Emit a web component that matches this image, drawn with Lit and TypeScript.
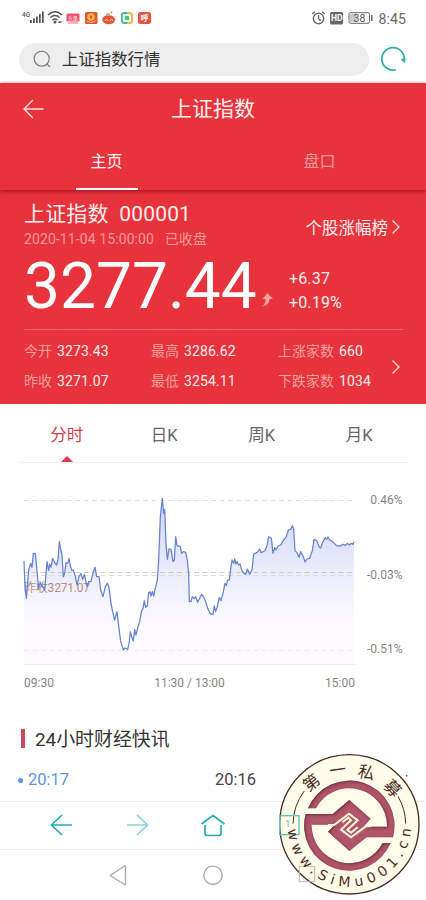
import { css, html, LitElement, svg } from "lit";
import { customElement } from "lit/decorators.js";

// intraday line, three units per css pixel
const LINE = `72,243 75,320 79,355 86,270 92,250 96,262 100,220 106,220 110,262 116,325 121,308
  128,320 134,330 141,245 146,272 149,252 153,262 158,235 163,246 170,255 174,240 178,185 182,208
  186,225 190,290 194,280 198,248 203,250 207,235 212,262 216,272 220,270 226,290 231,315 237,290
  243,280 248,298 253,283 261,320 266,305 273,305 280,275 285,262 290,290 297,290 302,330 309,350
  316,320 322,310 327,322 333,370 338,395 344,420 351,395 355,430 362,485 370,510 375,504 383,508
  388,485 391,455 395,470 400,483 404,448 408,465 414,440 419,425 425,392 429,385 433,362 437,382
  442,378 446,338 450,335 453,348 457,335 461,348 467,320 472,300 476,240 481,110 487,55 491,100
  494,88 498,190 502,238 507,207 513,208 519,245 523,240 527,170 531,197 541,200 545,220 550,215
  557,217 562,240 566,280 568,365 573,365 577,350 582,356 587,350 593,367 599,355 605,343 611,352
  617,365 623,385 630,400 639,404 643,378 647,395 652,380 658,352 663,362 669,340 675,310 679,317
  683,300 688,300 693,260 696,240 701,250 704,237 708,252 712,245 716,255 720,252 726,272 732,280
  737,283 742,267 749,283 756,270 761,222 772,217 779,207 783,218 794,213 801,197 806,170 814,175
  819,220 824,203 828,210 834,198 842,195 852,178 859,170 865,150 872,148 877,137 881,147 885,212
  891,218 897,232 902,215 910,230 915,246 921,237 929,235 937,212 942,178 951,183 957,200 962,204
  969,185 976,172 980,178 984,171 989,180 997,184 1003,190 1010,197 1021,198 1029,193 1036,196
  1043,190 1048,195 1054,190 1059,193 1062,186`;

const STATS = [
  ["今开", "3273.43"],
  ["最高", "3286.62"],
  ["上涨家数", "660"],
  ["昨收", "3271.07"],
  ["最低", "3254.11"],
  ["下跌家数", "1034"],
];

const CHEVRON = html`<svg width="10" height="16" viewBox="0 0 10 16">
  <path d="M1.500 1.500 8 8l-6.500 6.500" fill="none" stroke="#ffe1de" stroke-width="1.300" />
</svg>`;

@customElement("status-bar")
export class StatusBar extends LitElement {
  static styles = css`
    :host {
      display: flex;
      justify-content: space-between;
      height: 37px;
      padding: 0 20px 0 22px;
    }

    .right {
      display: flex;
      align-items: center;
      font: 14px Roboto, sans-serif;
      color: #686868;
    }

    .clock {
      margin-left: 5px;
      letter-spacing: 0.1px;
    }

    svg {
      display: block;
    }
  `;

  render() {
    return html`
      <svg width="135" height="37" viewBox="22 0 135 37">
        <text x="22" y="17" font-family="Roboto" font-size="6.500" font-weight="500" fill="#555">4G</text>
        <g fill="#555">
          <path d="M30 20h1.800v3H30zM33 18.500h1.800V23H33zM36 16.500h1.800V23H36zM39 14h1.700v9H39zM42 11.500h1.700V23H42z" />
          <circle cx="55" cy="22" r="1.500" />
          <path d="m58 23 1.500-2 1.300 2zM59.800 21.300h2.400L61 23z" />
        </g>
        <g fill="none" stroke="#555" stroke-width="1.400">
          <path d="M48 15q7-6.500 14 0M50.300 17.500q4.700-4 9.400 0M52.500 20q2.500-2.200 5 0" />
        </g>
        <rect x="66.500" y="13.500" width="13" height="8" rx="1" fill="#ef5269" />
        <text x="68" y="19.500" font-family="Noto Sans CJK SC" font-size="5" fill="#fff">头条</text>
        <path d="M68 23h10" stroke="#f59aa7" stroke-width="1.500" />
        <rect x="85" y="12" width="12.500" height="12" rx="1.500" fill="#e3543b" />
        <circle cx="91" cy="17" r="3.800" fill="#f9b53c" />
        <path d="M90 15.500h2v3h-2z" fill="#e3543b" />
        <path d="m86.500 21 4.500 1.500 4.500-1.500" fill="none" stroke="#f6c077" />
        <ellipse cx="108.700" cy="19.800" rx="6.500" ry="4.500" fill="#e35a3b" />
        <path d="M106 15.500q1-2 4-1.500" fill="none" stroke="#8a9a5a" stroke-width="1.200" />
        <circle cx="111.500" cy="12.500" r="1" fill="#ed745b" />
        <path d="m105 21 1.500-2 1.500 2m2 0 1.500-2 1.500 2" fill="none" stroke="#fac4a7" />
        <path d="M124 12h6v12h-6a3 3 0 0 1-3-3v-6a3 3 0 0 1 3-3z" fill="#4dbb9b" />
        <path d="M127 12h3a3 3 0 0 1 3 3v6a3 3 0 0 1-3 3h-3z" fill="#e6b84c" />
        <rect x="122.800" y="14" width="8.200" height="8" rx="1.500" fill="#e6fff4" />
        <path d="M125 16h4v4h-4z" fill="#53be83" />
        <rect x="138" y="12" width="13" height="12" rx="2.500" fill="#e6533f" />
        <text x="140.500" y="21" font-family="Noto Sans CJK SC" font-size="8" font-weight="700" fill="#fff">呼</text>
      </svg>
      <div class="right">
        <svg width="63" height="37" viewBox="313 0 63 37">
          <g fill="none" stroke="#686868" stroke-width="1.400">
            <circle cx="320.500" cy="18.500" r="5.200" />
            <path d="M320.500 15v3.800l2.300 2M314.300 14l2.600-2.200M326.700 14l-2.600-2.200" />
            <rect x="351" y="12.700" width="20.500" height="10.600" rx="1.500" stroke-width="1" />
          </g>
          <rect x="332" y="12" width="13" height="12.500" rx="1.500" fill="#686868" />
          <text x="333" y="21.300" font-family="Roboto" font-size="8.500" font-weight="700" fill="#fff">HD</text>
          <path d="M352 13.700h7v8.600h-7z" fill="#c9c9c9" />
          <path d="M373 15h1.500v6H373z" fill="#686868" />
          <text x="355.500" y="22" font-family="Roboto" font-size="10.500" fill="#555">38</text>
        </svg>
        <span class="clock">8:45</span>
      </div>
    `;
  }
}

@customElement("quote-panel")
export class QuotePanel extends LitElement {
  static styles = css`
    :host {
      display: block;
      height: 321px;
      background: #e8323c;
      color: #fff0ee;
    }

    .head {
      height: 107px;
      box-shadow: 0 1px 4px rgba(100, 0, 0, 0.65);
    }

    .title {
      display: grid;
      grid-template-columns: 40px 1fr 40px;
      align-items: center;
      height: 50px;
      padding: 0 13px;
      font-size: 21px;
      text-align: center;
    }

    .title span {
      padding-bottom: 3px;
    }

    .back {
      justify-self: end;
    }

    .tabs {
      display: grid;
      grid-template-columns: 1fr 1fr;
      height: 56px;
      font-size: 16px;
      text-align: center;
    }

    .tab {
      display: flex;
      flex-direction: column;
      align-items: center;
      justify-content: space-between;
      line-height: 57px;
      color: #f69a96;
    }

    .tab.active {
      color: #fff0ee;
    }

    .active::after {
      content: "";
      width: 62px;
      height: 2px;
      margin-top: -3px;
      background: #fff;
    }

    .body {
      padding: 12px 23px 0 24px;
    }

    .top {
      display: flex;
      justify-content: space-between;
      height: 50px;
    }

    .name {
      font-size: 21px;
      line-height: 24px;
      letter-spacing: 0.15px;
      white-space: pre;
    }

    .date {
      font-size: 14px;
      line-height: 26px;
      letter-spacing: 0.1px;
      white-space: pre;
      color: #f79c98;
    }

    .rank {
      display: flex;
      align-items: center;
      gap: 3px;
      height: 49px;
      padding-right: 2px;
      font-size: 16.5px;
    }

    .price {
      display: flex;
      height: 77px;
      border-bottom: 1px solid #f0666a;
    }

    .big {
      width: 235px;
      font-size: 64px;
      line-height: 69px;
      color: #fff;
    }

    .up {
      margin: 40px 15px 0 1px;
    }

    .change {
      padding-top: 15px;
      font-size: 16px;
      line-height: 24px;
      letter-spacing: 0.15px;
    }

    .bottom {
      display: flex;
      align-items: center;
      justify-content: space-between;
      padding: 7px 2px 0 0;
    }

    .stats {
      display: grid;
      grid-template-columns: 127px 127px 106px;
      font-size: 14px;
      line-height: 29.5px;
      letter-spacing: 0.1px;
      white-space: nowrap;
    }

    .label {
      margin-right: 5px;
      letter-spacing: 0;
      color: #f8a19d;
    }
  `;

  render() {
    return html`
      <div class="head">
        <div class="title">
          <svg class="back" width="32" height="24" viewBox="0 0 32 24" fill="none" stroke="#ffe3e0" stroke-width="1.400">
            <path d="M22.500 13H3M12 4l-9 9 9 9" />
          </svg>
          <span>上证指数</span>
        </div>
        <div class="tabs">
          <div class="tab active">主页</div>
          <div class="tab">盘口</div>
        </div>
      </div>
      <div class="body">
        <div class="top">
          <div>
            <div class="name">上证指数  000001</div>
            <div class="date">2020-11-04 15:00:00   已收盘</div>
          </div>
          <div class="rank">个股涨幅榜${CHEVRON}</div>
        </div>
        <div class="price">
          <span class="big">3277.44</span>
          <svg class="up" width="14" height="16" viewBox="0 0 14 16">
            <path d="M7.500 1 13 7H9.500q0 6-7.500 7.500Q6 12 5.500 7H2.500z" fill="#f9a19e" />
          </svg>
          <div class="change">+6.37<br />+0.19%</div>
        </div>
        <div class="bottom">
          <div class="stats">
            ${STATS.map(([label, value]) => html`<div><span class="label">${label}</span>${value}</div>`)}
          </div>
          ${CHEVRON}
        </div>
      </div>
    `;
  }
}

@customElement("index-chart")
export class IndexChart extends LitElement {
  static styles = css`
    :host {
      display: block;
      height: 306px;
    }

    .periods {
      display: grid;
      grid-template-columns: repeat(4, 1fr);
      height: 58px;
      margin: 0 18px;
      border-bottom: 1px solid #eee;
      font-size: 16.5px;
      line-height: 63px;
      text-align: center;
      color: #666;
    }

    .active {
      display: flex;
      flex-direction: column;
      align-items: center;
      color: #d33f4a;
    }

    .active::after {
      content: "";
      margin-top: -11px;
      border: 6px solid transparent;
      border-top: 0;
      border-bottom-color: #d33f4a;
    }

    .plot {
      display: block;
    }

    text {
      font-size: 12px;
      fill: #858585;
    }
  `;

  grid(y: number, color: string) {
    return svg`<path d="M24 ${y}H354" stroke=${color} stroke-dasharray="5 3.500" />`;
  }

  render() {
    return html`
      <div class="periods">
        <span class="active">分时</span><span>日K</span><span>周K</span><span>月K</span>
      </div>
      <svg class="plot" width="426" height="240" viewBox="0 463 426 240">
        <defs>
          <linearGradient id="fill" x1="0" y1="0" x2="0" y2="1">
            <stop offset="0" stop-color="#cdd4f7" />
            <stop offset="0.45" stop-color="#ecedfc" />
            <stop offset="0.75" stop-color="#fcf9ff" />
            <stop offset="1" stop-color="#fefaff" />
          </linearGradient>
        </defs>
        <path
          d="M72,553 L${LINE} L1062,553z"
          transform="translate(0 480) scale(.33333)"
          fill="url(#fill)"
        />
        ${this.grid(500.5, "#dedede")} ${this.grid(572.5, "#d9cba5")}
        ${this.grid(575.5, "#dcdce4")} ${this.grid(650.5, "#f2e8ee")}
        <path d="M24 664.500H355" stroke="#ececf2" />
        <text x="24" y="591.500" textLength="66" style="fill:#b98c7c">昨收3271.07</text>
        <polyline
          points=${LINE}
          transform="translate(0 480) scale(.33333)"
          fill="none"
          stroke="#6683d3"
          stroke-width="3.800"
          stroke-linejoin="round"
        />
        <text x="402.500" y="503.500" text-anchor="end">0.46%</text>
        <text x="402.500" y="578.500" text-anchor="end">-0.03%</text>
        <text x="402.500" y="652.500" text-anchor="end">-0.51%</text>
        <text x="24" y="687">09:30</text>
        <text x="189.500" y="687" text-anchor="middle">11:30 / 13:00</text>
        <text x="355" y="687" text-anchor="end">15:00</text>
      </svg>
    `;
  }
}

@customElement("fund-seal")
export class FundSeal extends LitElement {
  static styles = css`
    :host,
    svg {
      display: block;
    }
  `;

  render() {
    // one arc with its bar, the other is the same turned by 180 degrees
    const arc = svg`<path d="M114 190A135 135 0 0 1 369 277H278V245H351A113 113 0 0 0 138 190z" />`;
    return html`
      <svg width="156" height="155" viewBox="0 0 468 465">
        <defs>
          <path id="bottom" d="M53 240a185 185 0 0 0 370 0" />
          <filter id="inset" x="-10%" y="-10%" width="120%" height="120%">
            <feFlood flood-color="#3d1218" flood-opacity="0.85" />
            <feComposite in2="SourceAlpha" operator="out" />
            <feGaussianBlur stdDeviation="4" />
            <feOffset dx="2" dy="4" />
            <feComposite in2="SourceAlpha" operator="in" result="shade" />
            <feMerge>
              <feMergeNode in="SourceGraphic" />
              <feMergeNode in="shade" />
            </feMerge>
          </filter>
        </defs>
        <circle cx="238" cy="238" r="209" fill="#fffdea" stroke="#4c2a24" stroke-width="4" />
        <g fill="#b0546a" filter="url(#inset)">
          ${arc}
          <g transform="rotate(180 238 242)">${arc}</g>
          <path d="M238 165 302 221 282 244 290 277 238 318 174 260 194 240 188 207z" />
        </g>
        <g fill="none" stroke="#fff8d6" stroke-width="6">
          <path d="M174 240h18l45-34 26 20-31 29 11 8 20-16" />
          <path d="M304 244h-16l-45 33-30-23 30-28-8-8-18 14" />
        </g>
        <g fill="none" stroke="#4c2a24" stroke-width="3">
          <path d="M69 236A169 169 0 0 1 103 138M407 236A169 169 0 0 0 384 154" />
        </g>
        <g fill="none">
          <rect x="29" y="212" width="58" height="57" stroke="#62bfbd" stroke-width="4" />
          <rect x="88" y="364" width="46" height="46" stroke="#b9b9b3" stroke-width="3" />
        </g>
        <text x="45" y="247" font-family="Roboto" font-size="28" fill="#62bfbd">1</text>
        <g font-family="Noto Sans CJK SC" font-size="50" fill="#4c2a24" text-anchor="middle">
          <text transform="translate(124 113) rotate(-38)" y="18">第</text>
          <text transform="translate(203 75) rotate(-8)" y="18">一</text>
          <text transform="translate(289 82) rotate(12)" y="18">私</text>
          <text transform="translate(368 130) rotate(46)" y="18">募</text>
        </g>
        <text font-family="DejaVu Sans" font-size="42" fill="#4c2a24">
          <textPath href="#bottom" startOffset="14" textLength="556">www.SiMu001.cn</textPath>
        </text>
        <circle cx="410" cy="92" r="2.500" fill="#555" />
      </svg>
    `;
  }
}

@customElement("app-root")
export class AppRoot extends LitElement {
  static styles = css`
    :host {
      display: block;
      position: relative;
      width: 426px;
      height: 900px;
      overflow: hidden;
      background: #fff;
      font-family: Roboto, "Noto Sans CJK SC", sans-serif;
      font-weight: 400;
    }

    .search {
      display: flex;
      align-items: center;
      justify-content: space-between;
      height: 46px;
      padding: 0 20px 2px 19px;
      box-sizing: border-box;
    }

    .pill {
      display: flex;
      align-items: center;
      gap: 10px;
      width: 350px;
      height: 33px;
      padding-left: 14px;
      box-sizing: border-box;
      border-radius: 17px;
      background: #ededed;
      font-size: 16.4px;
      color: #333;
    }

    .query {
      padding-bottom: 2px;
    }

    .news {
      height: 91px;
      padding: 0 18px;
      box-sizing: border-box;
    }

    .heading {
      display: flex;
      align-items: center;
      gap: 10px;
      height: 57px;
      padding-left: 3px;
      font-size: 18.9px;
      color: #333;
    }

    .heading::before {
      content: "";
      width: 4px;
      height: 19px;
      background: #c9495a;
    }

    .heading span {
      padding-bottom: 3px;
    }

    .times {
      display: grid;
      grid-template-columns: 197px 1fr;
      font-size: 16.5px;
      line-height: 26px;
      color: #444;
    }

    .now {
      display: flex;
      align-items: center;
      gap: 5px;
      color: #5b94de;
    }

    .now::before {
      content: "";
      width: 5px;
      height: 5px;
      border-radius: 50%;
      background: #5b94de;
    }

    .bar {
      display: block;
      border-top: 1px solid #eee;
    }

    .seal {
      position: absolute;
      left: 270px;
      top: 745px;
    }
  `;

  render() {
    return html`
      <status-bar></status-bar>
      <div class="search">
        <div class="pill">
          <svg width="19" height="19" viewBox="0 0 19 19" fill="none" stroke="#777" stroke-width="1.100">
            <circle cx="8.700" cy="8.700" r="7.500" />
            <path d="m14 14 3 3" />
          </svg>
          <span class="query">上证指数行情</span>
        </div>
        <svg width="26" height="26" viewBox="0 0 26 26">
          <path d="M16 23.700A11.200 11.200 0 1 1 24.200 14" fill="none" stroke="#25afa8" stroke-width="1.700" />
          <path d="m20.500 13.500 5-1.500-.5 5z" fill="#25afa8" />
        </svg>
      </div>
      <quote-panel></quote-panel>
      <index-chart></index-chart>
      <div class="news">
        <div class="heading"><span>24小时财经快讯</span></div>
        <div class="times"><span class="now">20:17</span><span>20:16</span></div>
      </div>
      <svg class="bar" width="426" height="47" viewBox="0 0 426 47" fill="none" stroke="#23acb3" stroke-width="1.700">
        <path d="M72 23H51.500M62 13 51.500 23 62 33" />
        <path d="M127 23h20.500M137 13l10.500 10L137 33" stroke="#87d3d7" />
        <path d="m201.500 22 11.500-8.500L224.500 22M205 23v8.500q0 2 2 2h12q2 0 2-2V23" />
      </svg>
      <svg class="bar" width="426" height="51" viewBox="0 0 426 51" fill="none" stroke="#aaa" stroke-width="1.400">
        <path d="M125.500 16.500v17.500q0 1-1 .5L111 26q-1-.5 0-1l13.500-9q1-.5 1 .5z" />
        <circle cx="213" cy="25.300" r="9.200" />
      </svg>
      <fund-seal class="seal"></fund-seal>
    `;
  }
}
